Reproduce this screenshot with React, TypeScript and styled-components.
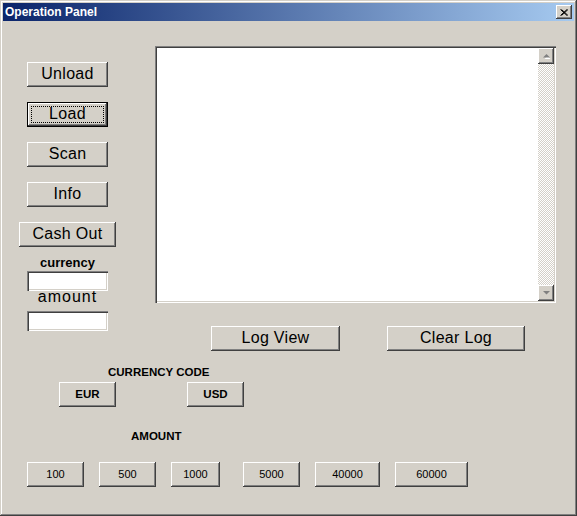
import React from 'react'
import styled, { createGlobalStyle, css } from 'styled-components'

const GlobalStyle = createGlobalStyle`
  html, body {
    margin: 0;
    padding: 0;
    background: #d4d0c8;
  }
  * {
    box-sizing: border-box;
  }
`;

const raised = css`
  box-shadow: inset -1px -1px #404040, inset 1px 1px #ffffff,
    inset -2px -2px #808080, inset 2px 2px #d4d0c8;
`;

const Window = styled.div`
  width: 577px;
  height: 516px;
  padding: 3px;
  background: #d4d0c8;
  display: flex;
  flex-direction: column;
  box-shadow: inset -1px -1px #404040, inset 1px 1px #d4d0c8,
    inset -2px -2px #808080, inset 2px 2px #ffffff;
  font-family: "Liberation Sans", Arial, sans-serif;
  color: #000;
`;

const TitleBar = styled.div`
  height: 18px;
  display: flex;
  align-items: center;
  justify-content: space-between;
  padding: 0 2px 0 2px;
  background: linear-gradient(to right, #0a246a, #a6caf0);
`;

const Title = styled.span`
  color: #ffffff;
  font-weight: bold;
  font-size: 12px;
  line-height: 18px;
`;

const CloseButton = styled.div`
  width: 16px;
  height: 14px;
  background: #d4d0c8;
  display: flex;
  align-items: center;
  justify-content: center;
  ${raised};
`;

const Body = styled.div`
  display: flex;
  flex-direction: column;
`;

const TopSection = styled.div`
  display: flex;
  padding-left: 16px;
`;

const LeftColumn = styled.div`
  width: 97px;
  margin-top: 41px;
  display: flex;
  flex-direction: column;
  align-items: center;
`;

const RightColumn = styled.div`
  margin-left: 39px;
  margin-top: 25px;
  display: flex;
  flex-direction: column;
`;

const Button = styled.button<{ $w: number; $size?: number; $bold?: boolean; $focused?: boolean }>`
  position: relative;
  width: ${p => p.$w}px;
  height: 25px;
  padding: 0 0 1px 0;
  border: none;
  background: #d4d0c8;
  font-family: "Liberation Sans", Arial, sans-serif;
  font-size: ${p => p.$size ?? 16}px;
  font-weight: ${p => (p.$bold ? 'bold' : 'normal')};
  letter-spacing: ${p => ((p.$size ?? 16) > 14 ? '0.3px' : '0')};
  color: #000;
  flex-shrink: 0;
  ${raised};

  ${p =>
    p.$focused &&
    css`
      box-shadow: inset 0 0 0 1px #000000, inset -2px -2px #404040,
        inset 2px 2px #ffffff, inset -3px -3px #808080;

      &::after {
        content: '';
        position: absolute;
        inset: 4px;
        border: 1px dotted #000;
      }
    `}
`;

const ButtonStack = styled.div`
  display: flex;
  flex-direction: column;
  align-items: center;
  gap: 15px;
`;

const SmallLabel = styled.div`
  height: 24px;
  line-height: 32px;
  font-size: 13px;
  font-weight: bold;
`;

const BigLabel = styled.div`
  height: 20px;
  font-size: 16px;
  line-height: 12px;
  letter-spacing: 1px;
`;

const TextField = styled.input`
  width: 81px;
  height: 20px;
  border: none;
  padding: 2px 3px;
  background: #ffffff;
  outline: none;
  box-shadow: inset 1px 1px #808080, inset 2px 2px #404040,
    inset -1px -1px #ffffff, inset -2px -2px #d4d0c8;
`;

const LogBox = styled.div`
  width: 401px;
  height: 257px;
  padding: 2px;
  background: #ffffff;
  display: flex;
  justify-content: flex-end;
  box-shadow: inset 1px 1px #808080, inset 2px 2px #404040,
    inset -1px -1px #ffffff, inset -2px -2px #d4d0c8;
`;

const ScrollBar = styled.div`
  width: 16px;
  display: flex;
  flex-direction: column;
  justify-content: space-between;
  background: repeating-conic-gradient(#d4d0c8 0 25%, #ffffff 0 50%) 0 0 / 2px 2px;
`;

const ScrollButton = styled.div`
  width: 16px;
  height: 16px;
  background: #d4d0c8;
  display: flex;
  align-items: center;
  justify-content: center;
  ${raised};
`;

const LogButtons = styled.div`
  display: flex;
  gap: 47px;
  margin-top: 23px;
  padding-left: 56px;
`;

const SectionLabel = styled.div<{ $left: number; $top: number }>`
  margin-top: ${p => p.$top}px;
  padding-left: ${p => p.$left}px;
  font-size: 11.5px;
  font-weight: bold;
  line-height: 14px;
`;

const ButtonRow = styled.div<{ $left: number; $top: number; $gap: number }>`
  display: flex;
  margin-top: ${p => p.$top}px;
  padding-left: ${p => p.$left}px;
  gap: ${p => p.$gap}px;
`;

const amounts = [
  { label: '100', w: 57, extra: 0 },
  { label: '500', w: 57, extra: 0 },
  { label: '1000', w: 49, extra: 0 },
  { label: '5000', w: 57, extra: 8 },
  { label: '40000', w: 65, extra: 0 },
  { label: '60000', w: 73, extra: 0 },
];

const ArrowUp = () => (
  <svg width="9" height="6" viewBox="0 0 9 6">
    <polygon points="1.5,5 4.5,2 7.5,5" fill="#ffffff" transform="translate(1,1)" />
    <polygon points="1,4.5 4.5,1 8,4.5" fill="#808080" />
  </svg>
);

const ArrowDown = () => (
  <svg width="9" height="6" viewBox="0 0 9 6">
    <polygon points="1,1 8,1 4.5,4.5" fill="#808080" />
  </svg>
);

export default function App() {
  return (
    <>
      <GlobalStyle />
      <Window>
        <TitleBar>
          <Title>Operation Panel</Title>
          <CloseButton>
            <svg width="8" height="7" viewBox="0 0 8 7">
              <path d="M0.5 0.5 L7 6.5 M1.5 0.5 L8 6.5 M7 0.5 L0.5 6.5 M8 0.5 L1.5 6.5" stroke="#000" strokeWidth="1" />
            </svg>
          </CloseButton>
        </TitleBar>
        <Body>
          <TopSection>
            <LeftColumn>
              <ButtonStack>
                <Button $w={81}>Unload</Button>
                <Button $w={81} $focused>Load</Button>
                <Button $w={81}>Scan</Button>
                <Button $w={81}>Info</Button>
                <Button $w={97}>Cash Out</Button>
              </ButtonStack>
              <SmallLabel>currency</SmallLabel>
              <TextField />
              <BigLabel>amount</BigLabel>
              <TextField />
            </LeftColumn>
            <RightColumn>
              <LogBox>
                <ScrollBar>
                  <ScrollButton>
                    <ArrowUp />
                  </ScrollButton>
                  <ScrollButton>
                    <ArrowDown />
                  </ScrollButton>
                </ScrollBar>
              </LogBox>
              <LogButtons>
                <Button $w={129}>Log View</Button>
                <Button $w={138}>Clear Log</Button>
              </LogButtons>
            </RightColumn>
          </TopSection>

          <SectionLabel $left={105} $top={14}>CURRENCY CODE</SectionLabel>
          <ButtonRow $left={56} $top={3} $gap={71}>
            <Button $w={57} $size={11.5} $bold>EUR</Button>
            <Button $w={57} $size={11.5} $bold>USD</Button>
          </ButtonRow>

          <SectionLabel $left={128} $top={22}>AMOUNT</SectionLabel>
          <ButtonRow $left={24} $top={19} $gap={15}>
            {amounts.map(a => (
              <Button key={a.label} $w={a.w} $size={11} style={a.extra ? { marginLeft: a.extra } : undefined}>
                {a.label}
              </Button>
            ))}
          </ButtonRow>
        </Body>
      </Window>
    </>
  )
}
